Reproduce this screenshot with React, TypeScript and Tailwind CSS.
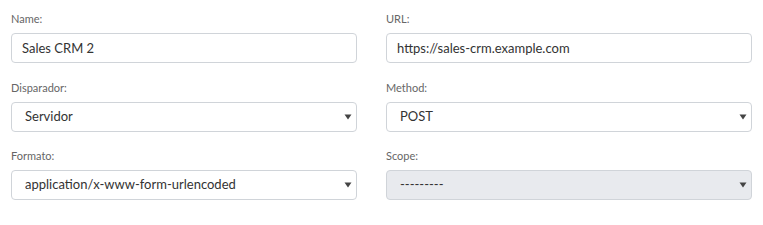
import React from "react";

const Arrow = () => (
  <svg className="pointer-events-none absolute right-[5px] top-1/2 -translate-y-1/2" width="8" height="6" viewBox="0 0 8 6">
    <path d="M0.5 0.5 H7.5 L4 5.5 Z" fill="#444" />
  </svg>
);

function Field({ label, children }: { label: string; children: React.ReactNode }) {
  return (
    <div className="flex flex-col">
      <label className="text-[11px] leading-[18px] text-[#666] mb-[5px]">{label}</label>
      {children}
    </div>
  );
}

function TextInput({ value }: { value: string }) {
  return (
    <input
      readOnly
      value={value}
      className="h-[30px] w-full rounded-[4px] border border-[#d0d4d9] bg-white px-[10px] text-[13px] text-[#333] outline-none"
    />
  );
}

function Select({ value, disabled }: { value: string; disabled?: boolean }) {
  return (
    <div className="relative">
      <select
        disabled={disabled}
        defaultValue={value}
        className={
          disabled
            ? "h-[30px] w-full appearance-none rounded-[4px] border border-[#d0d4d9] bg-[#e8eaee] pl-[13px] text-[13px] text-[#333] outline-none"
            : "h-[30px] w-full appearance-none rounded-[4px] border border-[#d0d4d9] bg-white pl-[13px] text-[13px] text-[#333] outline-none"
        }
      >
        <option value={value}>{value}</option>
      </select>
      <Arrow />
    </div>
  );
}

export default function App() {
  return (
    <div
      className="w-[763px] h-[225px] bg-white pl-[11px] pt-[10px]"
      style={{ fontFamily: "Lato, 'Noto Sans', sans-serif" }}
    >
      <div className="grid grid-cols-[346px_366px] gap-x-[29px] gap-y-[15.5px]">
        <Field label="Name:">
          <TextInput value="Sales CRM 2" />
        </Field>
        <Field label="URL:">
          <TextInput value="https://sales-crm.example.com" />
        </Field>
        <Field label="Disparador:">
          <Select value="Servidor" />
        </Field>
        <Field label="Method:">
          <Select value="POST" />
        </Field>
        <Field label="Formato:">
          <Select value="application/x-www-form-urlencoded" />
        </Field>
        <Field label="Scope:">
          <Select value="---------" disabled />
        </Field>
      </div>
    </div>
  );
}
